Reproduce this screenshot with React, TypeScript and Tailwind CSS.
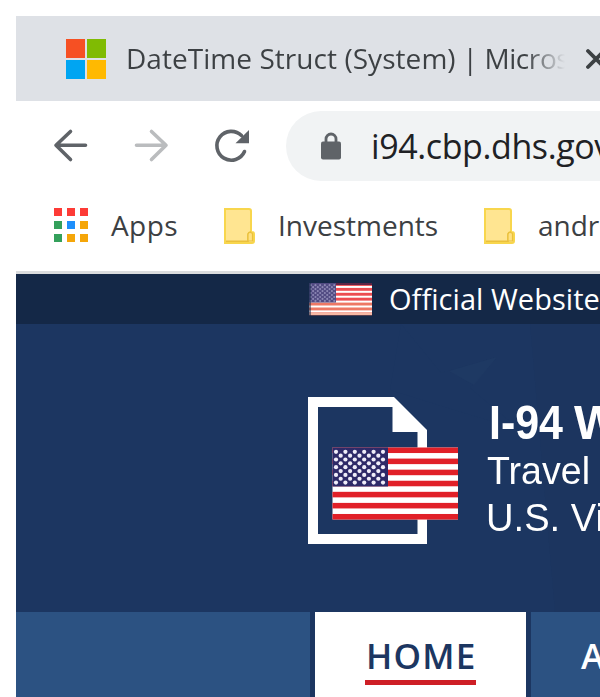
import React from "react";

function Stars({ faint = false }: { faint?: boolean }) {
  const rows = [0, 1, 2, 3, 4, 5, 6, 7, 8];
  return (
    <g fill={faint ? "#8d88b4" : "#efedf8"}>
      {rows.flatMap((r) =>
        Array.from({ length: r % 2 ? 5 : 6 }, (_, c) => (
          <circle key={`${r}-${c}`} cx={3.5 + c * 9.4 + (r % 2 ? 4.7 : 0)} cy={4.3 + r * 3.85} r={2.1} />
        ))
      )}
    </g>
  );
}

function BigFlag() {
  return (
    <g transform="translate(332.5 447.5)">
      <rect width="125.5" height="72" fill="#fff" />
      {[0, 1, 2, 3, 4, 5, 6].map((i) => (
        <rect key={i} y={i * 11.08} width="125.5" height="5.54" fill="#e12028" />
      ))}
      <rect y="0" width="55.5" height="39" fill="#2e2a68" />
      <Stars />
    </g>
  );
}

function SmallFlag() {
  return (
    <svg className="block h-[33px] w-[63px] blur-[0.4px]" viewBox="0 0 63 33">
      <rect width="63" height="32" fill="#fff" />
      {[0, 1, 2, 3, 4, 5, 6].map((i) => (
        <rect key={i} y={i * 4.9} width="63" height="2.9" fill={i < 4 ? "#ec4b50" : "#ee7864"} />
      ))}
      <rect y="30" width="63" height="2" fill="#f6b8a4" />
      <rect width="63" height="2" fill="#5d2446" />
      <rect width="27" height="19.5" fill="#514b82" />
      <g transform="scale(.5 .51)">
        <Stars faint />
      </g>
      <rect width="2" height="33" fill="#142847" opacity=".55" />
    </svg>
  );
}

function Folder() {
  return (
    <svg className="block h-[36px] w-[31px]" viewBox="0 0 31 36">
      <path d="M1 1H25Q27 1 27 3V24H28Q30 24 30 26V33Q30 35 28 35H1Z" fill="#ffe591" stroke="#f8d64d" strokeWidth="2" />
      <path d="M2 33.2H24V27Q24 24 27 24" fill="none" stroke="#eac03c" strokeWidth="1.6" />
      <path d="M24 33V26.5Q24 24.5 26.3 24.5T28.5 26.5V33Z" fill="#ffe183" stroke="#eac03c" strokeWidth="1.2" />
    </svg>
  );
}

const dots = ["#fd3b36", "#fd3b36", "#fd3b36", "#34a05b", "#1e8ffb", "#f5a609", "#34a05b", "#f5a609", "#f5a609"];

export default function App() {
  return (
    <div className="h-[697px] w-[600px] overflow-hidden bg-white pt-4 pl-4 font-['Open_Sans',sans-serif] whitespace-nowrap">
      <div className="flex h-[85px] items-center bg-[#dee1e6] pl-[50px]">
        <div className="grid h-10 w-10 shrink-0 grid-cols-2 gap-[2px]">
          <i className="bg-[#f65023]" />
          <i className="bg-[#80bb03]" />
          <i className="bg-[#00a5f2]" />
          <i className="bg-[#ffb901]" />
        </div>
        <div className="mb-[2px] ml-[20px] w-[439px] shrink-0 overflow-hidden bg-gradient-to-r from-[#3c4043] from-[91%] to-transparent bg-clip-text text-[28px] leading-[42px] text-transparent">
          <span className="tracking-[0.05px]">DateTime Struct (System)</span>
          <span className="tracking-[-0.4px]"> | Micros</span>
        </div>
        <svg className="ml-[21px] block h-6 w-6 shrink-0" viewBox="0 0 24 24">
          <path d="M2 4L18 20M18 4L2 20" stroke="#3c4043" strokeWidth="3.8" strokeLinecap="round" />
        </svg>
      </div>

      <div className="flex h-[90px] pt-[10px]">
        <svg className="block h-[70px] w-[270px] shrink-0" viewBox="16 111 270 70">
          <g fill="none" stroke="#5f6368" strokeWidth="3.6" strokeLinecap="round" strokeLinejoin="round">
            <path d="M85.5 145.3H56M70.5 131.5L56 145.3L70.5 159.5" />
            <path d="M136.5 145.3H166M151.5 131.5L166 145.3L151.5 159.5" stroke="#babcbe" />
            <path d="M244.5 151.5A14.4 14.4 0 1 1 241.5 135.6" />
          </g>
          <path d="M249 130V143.3H235.5Z" fill="#5f6368" />
        </svg>
        <div className="flex h-[70px] w-[330px] shrink-0 items-center rounded-l-full bg-[#f1f3f4] pl-[35px]">
          <svg className="block h-7 w-5 shrink-0" viewBox="0 0 20 28">
            <path d="M5 11V7A5 5 0 0 1 15 7V11" fill="none" stroke="#5f6368" strokeWidth="2.8" />
            <rect y="9.5" width="20" height="18" rx="2" fill="#5f6368" />
          </svg>
          <span className="ml-[30px] text-[34px] leading-[48px] tracking-[-0.4px] text-[#202124]">i94.cbp.dhs.gov</span>
        </div>
      </div>

      <div className="flex h-[80px] pt-[15px] pl-[38px] text-[28px] leading-[38px] text-[#3c4043]">
        <div className="mt-[2px] grid h-[34px] w-[34px] shrink-0 grid-cols-3 gap-x-[4.5px] gap-y-[4.5px]">
          {dots.map((c, i) => (
            <i key={i} className="h-[8px] w-[8px]" style={{ background: c }} />
          ))}
        </div>
        <span className="ml-[23px] w-[113px] shrink-0 tracking-[0.4px]">Apps</span>
        <div className="mt-[2px] shrink-0"><Folder /></div>
        <span className="ml-[23px] w-[206px] shrink-0">Investments</span>
        <div className="mt-[2px] shrink-0"><Folder /></div>
        <span className="ml-[23px]">andr</span>
      </div>
      <div className="h-[3px] bg-[#dadcde]" />

      <div className="flex h-[50px] items-center bg-[#142847] pl-[293px]">
        <SmallFlag />
        <span className="ml-[17px] text-[29px] leading-[42px] tracking-[0.05px] text-white">Official Website</span>
      </div>

      <svg className="block h-[288px] w-[584px] bg-[#1c3661]" viewBox="16 324 584 288">
        <path d="M401 324L441 373L497 357L470 388L520 430L390 390Z" fill="#1d3965" opacity=".25" />
        <path d="M449 371L497 357L474 385Z" fill="#203b64" opacity=".7" />
        <path d="M530 324H600V612H555Z" fill="#1a345d" opacity=".25" />
        <g className="blur-[0.6px]">
          <path fillRule="evenodd" d="M308 397H394L427 430V544H308ZM318 407H392.5V432H417.5V534H318Z" fill="#fff" />
          <BigFlag />
        </g>
        <g className="blur-[0.6px]" fill="#fff" fontFamily="Liberation Sans, sans-serif">
          <text x="489" y="439" fontSize="48" fontWeight="bold" textLength="74" lengthAdjust="spacingAndGlyphs">I-94</text>
          <text x="574" y="439" fontSize="48" fontWeight="bold">W</text>
          <text x="487" y="484" fontSize="39" textLength="103" lengthAdjust="spacingAndGlyphs">Travel</text>
          <text x="486" y="531" fontSize="39" textLength="118" lengthAdjust="spacingAndGlyphs">U.S. Vi</text>
        </g>
      </svg>

      <div className="flex h-[85px] gap-[5px] bg-[#1c3661] text-[35px] leading-[48px] font-semibold">
        <div className="w-[294px] shrink-0 bg-[#2c5282]" />
        <div className="flex w-[211px] shrink-0 justify-center bg-white pt-[20px]">
          <span className="h-[53px] w-[111px] border-b-[5px] border-[#ce1f26] pl-px text-center tracking-[1.2px] text-[#1c3661]">HOME</span>
        </div>
        <div className="w-[80px] shrink-0 bg-[#2c5282] pt-[20px] pl-[50px] text-white">A</div>
      </div>
    </div>
  );
}
